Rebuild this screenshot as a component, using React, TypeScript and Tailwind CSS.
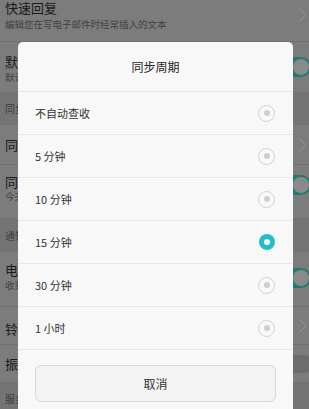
import React from "react";

const options = ["不自动查收", "5 分钟", "10 分钟", "15 分钟", "30 分钟", "1 小时"];

function Chevron() {
  return (
    <svg width="8" height="14" viewBox="0 0 8 14" className="shrink-0">
      <path d="M1 1l6 6-6 6" fill="none" stroke="#959595" strokeWidth="1" />
    </svg>
  );
}

function Toggle({ on }: { on: boolean }) {
  if (!on) {
    return <div className="w-[40px] h-[18px] rounded-full bg-[#6c6c6c] mr-[-4px] shrink-0" />;
  }
  return (
    <div className="w-[40px] h-[20px] rounded-full bg-[#1f7c71] mr-[-2px] flex items-center justify-end pr-[2px] shrink-0">
      <div className="w-[16px] h-[16px] rounded-full bg-[#8a8a8a]" />
    </div>
  );
}

function Radio({ checked }: { checked: boolean }) {
  if (checked) {
    return (
      <div className="w-[16px] h-[16px] rounded-full bg-[#22bfc6] flex items-center justify-center">
        <div className="w-[6px] h-[6px] rounded-full bg-white" />
      </div>
    );
  }
  return (
    <div className="w-[17px] h-[17px] rounded-full border border-[#d2d2d2] flex items-center justify-center">
      <div className="w-[6px] h-[6px] rounded-full bg-[#cecece]" />
    </div>
  );
}

export default function App() {
  return (
    <div
      className="relative w-[309px] h-[409px] overflow-hidden bg-[#7c7c7c]"
      style={{ fontFamily: '"Noto Sans CJK SC", "Noto Sans", sans-serif' }}
    >
      {/* settings page behind the dim */}
      <div className="flex flex-col">
        <div className="h-[42px] border-b border-[#707070] flex items-start justify-between pl-[5px] pr-[2px]">
          <div className="flex flex-col">
            <span className="text-[13px] leading-[16px] text-[#1a1a1a]">快速回复</span>
            <span className="text-[9.5px] leading-[16px] text-[#424242]">编辑您在写电子邮件时经常插入的文本</span>
          </div>
          <div className="pt-[8px]"><Chevron /></div>
        </div>
        <div className="h-[50px] flex items-center justify-between pl-[5px]">
          <div className="flex flex-col pt-[4px]">
            <span className="text-[13px] leading-[16px] text-[#1a1a1a]">默认账户</span>
            <span className="text-[9.5px] leading-[14px] text-[#424242]">默认使用此账户发送邮件</span>
          </div>
          <Toggle on />
        </div>
        <div className="h-[33px] bg-[#747474] flex items-center pl-[5px]">
          <span className="text-[10px] text-[#3c3c3c]">同步设置</span>
        </div>
        <div className="h-[40px] border-b border-[#707070] flex items-center justify-between pl-[5px] pr-[2px]">
          <span className="text-[13px] text-[#1a1a1a]">同步周期</span>
          <Chevron />
        </div>
        <div className="h-[53px] flex items-center justify-between pl-[5px]">
          <div className="flex flex-col pb-[8px]">
            <span className="text-[13px] leading-[16px] text-[#1a1a1a]">同步邮件</span>
            <span className="text-[9.5px] leading-[12px] text-[#424242]">今天的邮件自动同步</span>
          </div>
          <div className="pb-[14px]"><Toggle on /></div>
        </div>
        <div className="h-[34px] bg-[#747474] flex items-center pl-[5px]">
          <span className="text-[10px] text-[#3c3c3c]">通知设置</span>
        </div>
        <div className="h-[55px] border-b border-[#707070] flex items-center justify-between pl-[5px]">
          <div className="flex flex-col pb-[4px]">
            <span className="text-[13px] leading-[16px] text-[#1a1a1a]">电子邮件通知</span>
            <span className="text-[9.5px] leading-[14px] text-[#424242]">收到电子邮件时在状态栏中显示通知</span>
          </div>
          <div className="pb-[2px]"><Toggle on /></div>
        </div>
        <div className="h-[38px] border-b border-[#707070] flex items-center justify-between pl-[5px] pr-[2px]">
          <span className="text-[13px] text-[#1a1a1a] pt-[6px]">铃声</span>
          <Chevron />
        </div>
        <div className="h-[38px] border-b border-[#707070] flex items-center justify-between pl-[5px]">
          <span className="text-[13px] text-[#1a1a1a]">振动</span>
          <Toggle on={false} />
        </div>
        <div className="h-[30px] bg-[#747474] flex items-center pl-[5px]">
          <span className="text-[10px] text-[#3c3c3c]">服务器设置</span>
        </div>
      </div>

      {/* dialog */}
      <div className="absolute left-[18px] top-[42px] w-[275px] h-[400px] bg-[#f8f8f8] rounded-[5px] flex flex-col">
        <div className="h-[50px] border-b border-[#e6e6e6] flex items-center justify-center">
          <span className="text-[12px] text-[#222]">同步周期</span>
        </div>
        {options.map((o, i) => (
          <div
            key={o}
            className="h-[43px] border-b border-[#e8e8e8] flex items-center justify-between pl-[17px] pr-[18px]"
          >
            <span className="text-[11px] text-[#333]">{o}</span>
            <Radio checked={i === 3} />
          </div>
        ))}
        <div className="px-[17px] pt-[15px]">
          <div className="h-[37px] rounded-[6px] border border-[#d8d8d8] bg-[#f3f3f3] flex items-center justify-center">
            <span className="text-[12px] text-[#333]">取消</span>
          </div>
        </div>
      </div>
    </div>
  );
}
